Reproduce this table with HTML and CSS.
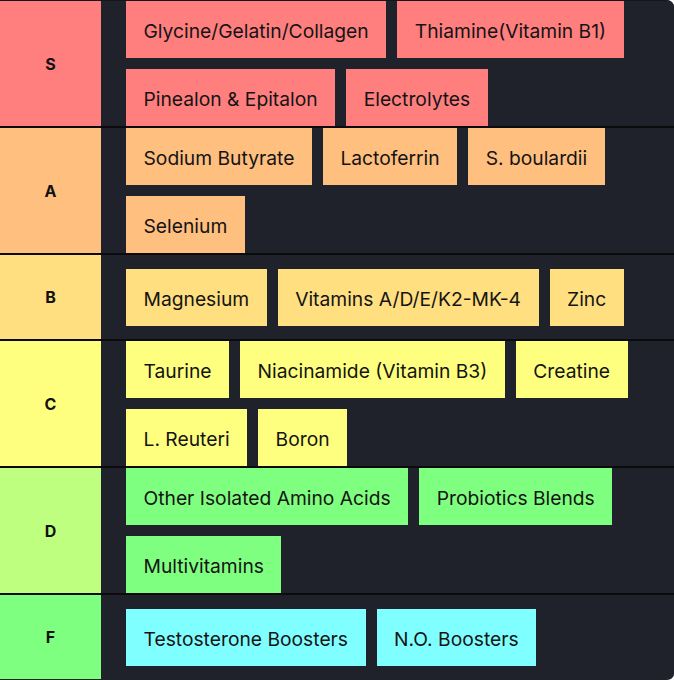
FILE: index.html
```html
<!DOCTYPE html>
<html lang="en">
<head>
<meta charset="utf-8">
<title>Tier List</title>
<link rel="stylesheet" href="styles.css">
</head>
<body>
<div class="tierlist">
  <div class="row tier-s">
    <div class="label">S</div>
    <div class="items">
      <div class="item">Glycine/Gelatin/Collagen</div>
      <div class="item">Thiamine(Vitamin B1)</div>
      <div class="item">Pinealon &amp; Epitalon</div>
      <div class="item">Electrolytes</div>
    </div>
  </div>
  <div class="row tier-a">
    <div class="label">A</div>
    <div class="items">
      <div class="item">Sodium Butyrate</div>
      <div class="item">Lactoferrin</div>
      <div class="item">S. boulardii</div>
      <div class="item">Selenium</div>
    </div>
  </div>
  <div class="row tier-b">
    <div class="label">B</div>
    <div class="items">
      <div class="item">Magnesium</div>
      <div class="item">Vitamins A/D/E/K2-MK-4</div>
      <div class="item">Zinc</div>
    </div>
  </div>
  <div class="row tier-c">
    <div class="label">C</div>
    <div class="items">
      <div class="item">Taurine</div>
      <div class="item">Niacinamide (Vitamin B3)</div>
      <div class="item">Creatine</div>
      <div class="item">L. Reuteri</div>
      <div class="item">Boron</div>
    </div>
  </div>
  <div class="row tier-d">
    <div class="label">D</div>
    <div class="items">
      <div class="item">Other Isolated Amino Acids</div>
      <div class="item">Probiotics Blends</div>
      <div class="item">Multivitamins</div>
    </div>
  </div>
  <div class="row tier-f">
    <div class="label">F</div>
    <div class="items">
      <div class="item">Testosterone Boosters</div>
      <div class="item">N.O. Boosters</div>
    </div>
  </div>
</div>
</body>
</html>
```

FILE: styles.css
```css
html, body {
  margin: 0;
  padding: 0;
  background: #ffffff;
}

body {
  font-family: Inter, "Noto Sans", "Liberation Sans", sans-serif;
}

.tierlist {
  width: 674px;
  height: 680px;
  background: #1f222b;
  border-top: 1px solid #14161c;
  border-radius: 0 7px 7px 0;
  overflow: hidden;
  box-sizing: border-box;
}

.row {
  display: flex;
  border-bottom: 2px solid #0b0b0d;
}

.row:last-child {
  border-bottom: none;
}

.label {
  width: 101px;
  flex: none;
  display: flex;
  align-items: center;
  justify-content: center;
  font-weight: 700;
  font-size: 16px;
  color: #111111;
}

.items {
  flex: 1;
  display: flex;
  flex-wrap: wrap;
  align-content: center;
  gap: 11px;
  padding-left: 25px;
  min-height: 84px;
  background: #1f222b;
}

.item {
  box-sizing: border-box;
  height: 57px;
  line-height: 53px;
  padding: 4px 17.5px 0;
  font-size: 19.25px;
  color: #141414;
  white-space: nowrap;
}

.tier-s .label, .tier-s .item { background: #ff7f7f; }
.tier-a .label, .tier-a .item { background: #ffbf7f; }
.tier-b .label, .tier-b .item { background: #ffdf7f; }
.tier-c .label, .tier-c .item { background: #ffff7f; }
.tier-d .label { background: #bfff7f; }
.tier-d .item { background: #7fff7f; }
.tier-f .label { background: #7fff7f; }
.tier-f .item { background: #7fffff; }
```
